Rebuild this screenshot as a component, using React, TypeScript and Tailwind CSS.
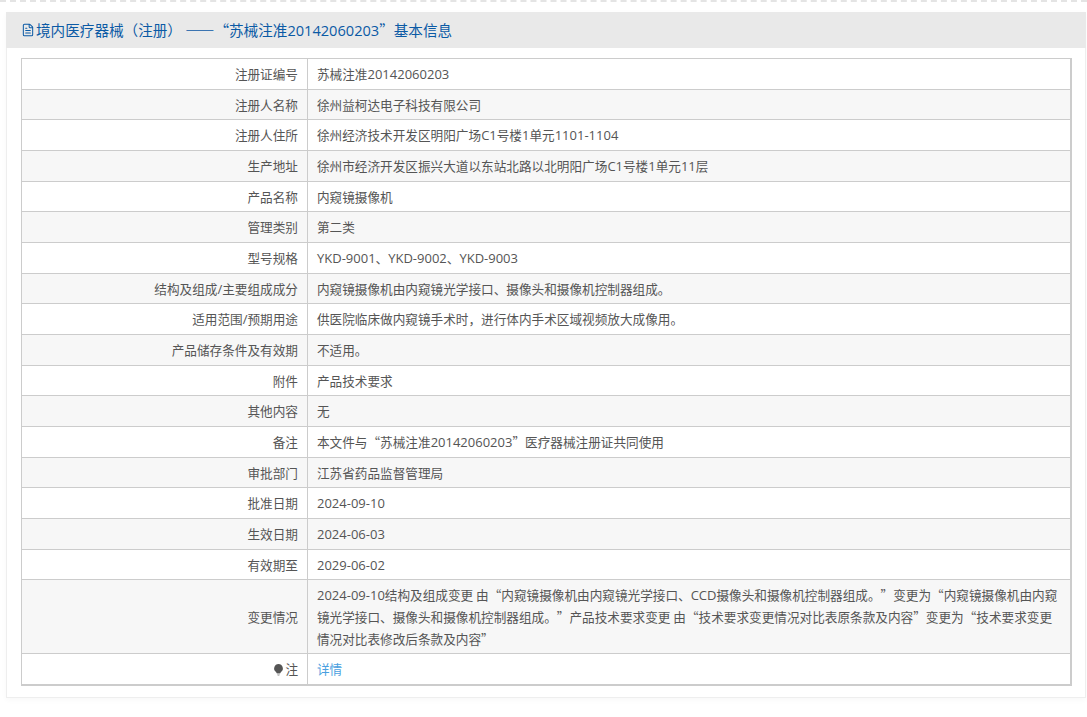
import { FileText } from 'lucide-react'

const FONT = "font-['Noto_Sans_CJK_SC','Open_Sans',sans-serif]"

const rows: [string, string][] = [
  ['注册证编号', '苏械注准20142060203'],
  ['注册人名称', '徐州益柯达电子科技有限公司'],
  ['注册人住所', '徐州经济技术开发区明阳广场C1号楼1单元1101-1104'],
  ['生产地址', '徐州市经济开发区振兴大道以东站北路以北明阳广场C1号楼1单元11层'],
  ['产品名称', '内窥镜摄像机'],
  ['管理类别', '第二类'],
  ['型号规格', 'YKD-9001、YKD-9002、YKD-9003'],
  ['结构及组成/主要组成成分', '内窥镜摄像机由内窥镜光学接口、摄像头和摄像机控制器组成。'],
  ['适用范围/预期用途', '供医院临床做内窥镜手术时，进行体内手术区域视频放大成像用。'],
  ['产品储存条件及有效期', '不适用。'],
  ['附件', '产品技术要求'],
  ['其他内容', '无'],
  ['备注', '本文件与“苏械注准20142060203”医疗器械注册证共同使用'],
  ['审批部门', '江苏省药品监督管理局'],
  ['批准日期', '2024-09-10'],
  ['生效日期', '2024-06-03'],
  ['有效期至', '2029-06-02'],
  ['变更情况', '2024-09-10结构及组成变更 由“内窥镜摄像机由内窥镜光学接口、CCD摄像头和摄像机控制器组成。”变更为“内窥镜摄像机由内窥镜光学接口、摄像头和摄像机控制器组成。”产品技术要求变更 由“技术要求变更情况对比表原条款及内容”变更为“技术要求变更情况对比表修改后条款及内容”'],
]

// latin runs sit a touch larger than the CJK glyphs, and use their own face
function Mixed({ text, latin = 'text-[13px]' }: { text: string; latin?: string }) {
  return (
    <>
      {text.split(/([A-Za-z0-9\-/]+)/).map((part, i) =>
        i % 2 === 1 ? (
          <span key={i} className={`font-['Open_Sans',sans-serif] leading-none ${latin}`}>{part}</span>
        ) : (
          part
        )
      )}
    </>
  )
}

function Bulb() {
  return (
    <svg viewBox="0 0 12 14" className="inline-block w-[11px] h-[13px] align-[-2px] mr-px" aria-hidden>
      <path d="M6 1a4.8 4.8 0 0 0-3 8.5c.6.5.9 1 1 1.5h4c.1-.5.4-1 1-1.5A4.8 4.8 0 0 0 6 1z" fill="#555" />
      <path d="M4.4 11.8h3.2M5 13.2h2" stroke="#999" strokeWidth="1" />
    </svg>
  )
}

export default function App() {
  return (
    <div lang="zh-CN" className={`${FONT} min-h-[717px] bg-white text-[12.64px] text-[#555] [text-spacing-trim:space-all]`}>
      <div className="h-[2px] border-t-2 border-dashed border-[#e4e4e4]" />
      <div className="ml-[6px] mr-px mt-[10px] border-x border-b border-[#eeeeee] bg-white shadow-[0_2px_6px_rgba(0,0,0,0.03)]">
        <h3 className="-mx-px flex h-9 items-center bg-[#e9e9e9] pl-[15px] text-[14.6px] font-normal text-[#0b5aa5]">
          <FileText className="mr-px h-[14px] w-[14px]" strokeWidth={1.75} />
          <span className="whitespace-pre">
            <Mixed text="境内医疗器械（注册） ——“苏械注准20142060203”基本信息" latin="text-[14.6px]" />
          </span>
        </h3>
        <div className="pb-[11px] pl-[14px] pr-[13px] pt-[10px]">
          <table className="w-full table-fixed border-collapse border-r-2 border-b-2 border-[#cccccc]">
            <colgroup>
              <col className="w-[286px]" />
              <col />
            </colgroup>
            <tbody>
              {rows.map(([label, value], i) => (
                <tr key={label} className={i % 2 === 1 ? 'bg-[#f7f7f7]' : 'bg-white'}>
                  <td className="border border-[#cccccc] px-[9px] py-1 text-right leading-[21.67px]">
                    <Mixed text={label} />
                  </td>
                  <td className="border border-[#cccccc] px-[9px] py-1 leading-[21.67px]">
                    <Mixed text={value} />
                  </td>
                </tr>
              ))}
              <tr className="bg-white">
                <td className="border border-[#cccccc] px-[9px] py-1 text-right leading-[21.67px]">
                  <Bulb />注
                </td>
                <td className="border border-[#cccccc] px-[9px] py-1 leading-[21.67px]">
                  <a href="#" className="text-[#4a9fe0]">详情</a>
                </td>
              </tr>
            </tbody>
          </table>
        </div>
      </div>
    </div>
  )
}
